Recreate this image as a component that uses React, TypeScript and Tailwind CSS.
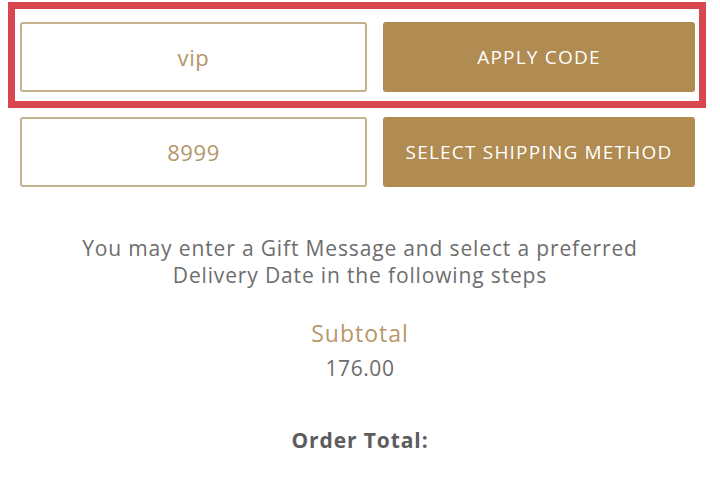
const gold = "bg-[#b08b52]";

const CodeRow = ({ value, label }: { value: string; label: string }) => (
  <div className="flex gap-[16px] items-start">
    <div className="w-[347px] h-[70px] border-2 border-[#c4b28e] rounded-[3px] flex items-center justify-center text-[22px] tracking-[0.6px] text-[#b4956a]">
      {value}
    </div>
    <button
      className={`w-[312px] h-[70px] ${gold} rounded-[3px] text-white text-[19px] font-medium tracking-[1.2px] uppercase`}
    >
      {label}
    </button>
  </div>
);

const App = () => {
  return (
    <div className="w-[720px] h-[494px] bg-white pl-[8px] pt-[2px] font-['Open_Sans',sans-serif] overflow-hidden">
      <div className="w-[698px] border-[7px] border-[#d8474f] pt-[13px] pb-[9px] pl-[5px] pr-[4px]">
        <CodeRow value="vip" label="Apply Code" />
      </div>
      <div className="mt-[9px] ml-[12px]">
        <CodeRow value="8999" label="Select Shipping Method" />
      </div>
      <div className="pr-[8px] text-center">
        <p className="mt-[48px] text-[21px] leading-[27px] tracking-[0.85px] text-[#6d6d6d]">
          You may enter a Gift Message and select a preferred
          <br />
          Delivery Date in the following steps
        </p>
        <p className="mt-[29px] text-[23px] leading-[30px] tracking-[1px] text-[#b8976a]">Subtotal</p>
        <p className="mt-[6px] text-[21px] leading-[28px] tracking-[0.6px] text-[#6d6d6d]">176.00</p>
        <p className="mt-[44px] text-[21px] leading-[28px] tracking-[0.9px] font-bold text-[#5c5c5e]">Order Total:</p>
      </div>
    </div>
  );
};

export default App;
